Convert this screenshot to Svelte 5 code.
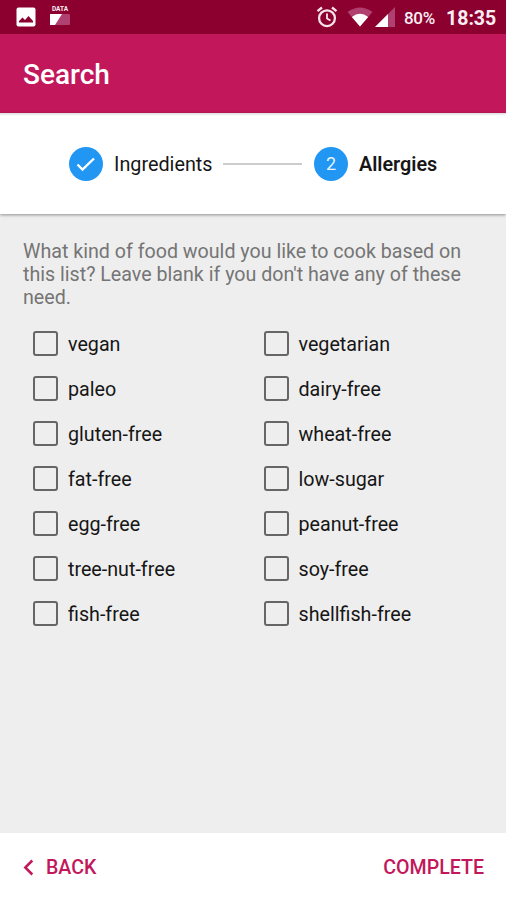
<script>
  let options = [
    'vegan', 'vegetarian',
    'paleo', 'dairy-free',
    'gluten-free', 'wheat-free',
    'fat-free', 'low-sugar',
    'egg-free', 'peanut-free',
    'tree-nut-free', 'soy-free',
    'fish-free', 'shellfish-free'
  ];

  let selected = [];
</script>

<div class="screen">
  <div class="status">
    <svg class="photo" width="20" height="20" viewBox="0 0 20 20">
      <rect x="0.5" y="0.5" width="19" height="19" rx="2" fill="#fff" />
      <path d="M3 15.5V14L6.5 10.5 9 13 12.5 9 17 14V15.5z" fill="#8c0030" />
    </svg>
    <div class="data">
      <span>DATA</span>
      <svg width="20" height="11" viewBox="0 0 20 11">
        <rect width="20" height="11" rx="1" fill="#b0406f" />
        <path d="M0 0H12L5 11H0z" fill="#fff" />
      </svg>
    </div>
    <div class="spacer"></div>
    <svg class="alarm" width="22" height="22" viewBox="0 0 22 22" fill="none" stroke="#f6e3ea" stroke-width="2.3">
      <circle cx="11" cy="12.2" r="7.9" />
      <path d="M11 7.5V12.5L14.5 14.6" stroke-width="1.8" />
      <path d="M1.5 5.2 6 1.5M20.5 5.2 16 1.5" />
    </svg>
    <svg class="wifi" width="26" height="20" viewBox="0 0 26 20">
      <path d="M0.5 5Q13-4.2 25.5 5L13 19.5z" fill="#b0406f" />
      <path d="M4.8 10Q13 3.6 21.2 10L13 19.5z" fill="#fff" />
    </svg>
    <svg class="signal" width="20" height="20" viewBox="0 0 20 20">
      <path d="M20 0V20H0z" fill="#b0406f" />
      <path d="M13 7V20H0z" fill="#fff" />
    </svg>
    <span class="battery">80%</span>
    <span class="time">18:35</span>
  </div>

  <header>
    <h1>Search</h1>
  </header>

  <div class="stepper">
    <div class="circle">
      <svg width="22" height="18" viewBox="0 0 22 18">
        <path d="M2.5 9.5 7.5 14.5 19 3.5" fill="none" stroke="#fff" stroke-width="2.4" />
      </svg>
    </div>
    <span class="step">Ingredients</span>
    <div class="line"></div>
    <div class="circle">2</div>
    <span class="step active">Allergies</span>
  </div>

  <main>
    <p>What kind of food would you like to cook based on this list? Leave blank if you don't have any of these need.</p>
    <div class="options">
      {#each options as option}
        <label>
          <input type="checkbox" value={option} bind:group={selected}>
          <span>{option}</span>
        </label>
      {/each}
    </div>
  </main>

  <footer>
    <button>
      <svg width="11" height="18" viewBox="0 0 11 18">
        <path d="M9.3 1.5 2.3 8.5 9.3 15.5" fill="none" stroke="#c2185b" stroke-width="2.5" />
      </svg>
      BACK
    </button>
    <button class="complete">COMPLETE</button>
  </footer>
</div>

<style>
  :global(body) {
    margin: 0;
  }
  .screen {
    display: flex;
    flex-direction: column;
    width: 506px;
    height: 900px;
    background: #eeeeee;
    font-family: Roboto, sans-serif;
    color: #161616;
    overflow: hidden;
  }
  .status {
    display: flex;
    align-items: center;
    flex: none;
    box-sizing: border-box;
    height: 34px;
    padding: 0 11px 0 16px;
    background: #8c0030;
    color: #fbeef3;
  }
  .status svg {
    display: block;
    flex: none;
  }
  .data {
    width: 20px;
    margin-left: 14px;
    padding-bottom: 3px;
  }
  .data span {
    display: block;
    height: 8px;
    font-size: 6.5px;
    font-weight: 700;
    line-height: 7px;
    text-align: center;
  }
  .spacer {
    flex: 1;
  }
  .wifi {
    margin-left: 9px;
  }
  .signal {
    margin-left: 2px;
  }
  .battery {
    width: 31px;
    margin: 1px 0 0 9px;
    font-size: 17px;
    font-weight: 500;
    letter-spacing: -0.3px;
  }
  .time {
    width: 49px;
    margin: 3px 0 0 11px;
    font-size: 19.5px;
    font-weight: 700;
  }
  header {
    display: flex;
    align-items: center;
    flex: none;
    height: 79px;
    padding-left: 23px;
    background: #c2185b;
  }
  h1 {
    margin: 1px 0 0;
    font-size: 28px;
    font-weight: 500;
    color: #fff;
  }
  .stepper {
    display: flex;
    align-items: center;
    flex: none;
    box-sizing: border-box;
    height: 101px;
    padding-left: 69px;
    background: linear-gradient(#dcdcdc, #fff 3px);
    box-shadow: 0 1px 3px rgba(0, 0, 0, 0.4);
  }
  .circle {
    display: flex;
    align-items: center;
    justify-content: center;
    width: 34px;
    height: 34px;
    border-radius: 50%;
    background: #2196f3;
    color: #e8f4fe;
    font-size: 18px;
  }
  .step {
    width: 98px;
    margin: 1px 0 0 11px;
    font-size: 19.8px;
    white-space: nowrap;
  }
  .active {
    font-weight: 600;
  }
  .line {
    width: 79px;
    height: 2px;
    margin: 0 12px 0 11px;
    background: #cccccc;
  }
  main {
    flex: 1;
    padding: 26px 23px 0;
  }
  p {
    margin: 0;
    font-size: 19.65px;
    line-height: 23px;
    color: #757575;
  }
  .options {
    display: grid;
    grid-template-columns: 230.5px 230.5px;
    grid-auto-rows: 45px;
    margin: 12px -23px 0 10px;
  }
  label {
    display: flex;
    align-items: center;
    font-size: 19.7px;
  }
  label span {
    padding-top: 2px;
  }
  input {
    appearance: none;
    box-sizing: border-box;
    width: 25px;
    height: 25px;
    margin: 0 10px 0 0;
    border: 2px solid #666;
    border-radius: 3px;
  }
  input:checked {
    border-color: #c2185b;
    background: #c2185b;
  }
  footer {
    display: flex;
    align-items: center;
    justify-content: space-between;
    flex: none;
    height: 67px;
    padding: 0 22px 0 23px;
    background: #fff;
  }
  button {
    display: flex;
    align-items: center;
    gap: 12px;
    padding: 2px 0 0;
    border: none;
    background: none;
    font-family: inherit;
    font-size: 19.6px;
    font-weight: 500;
    color: #c2185b;
  }
</style>
